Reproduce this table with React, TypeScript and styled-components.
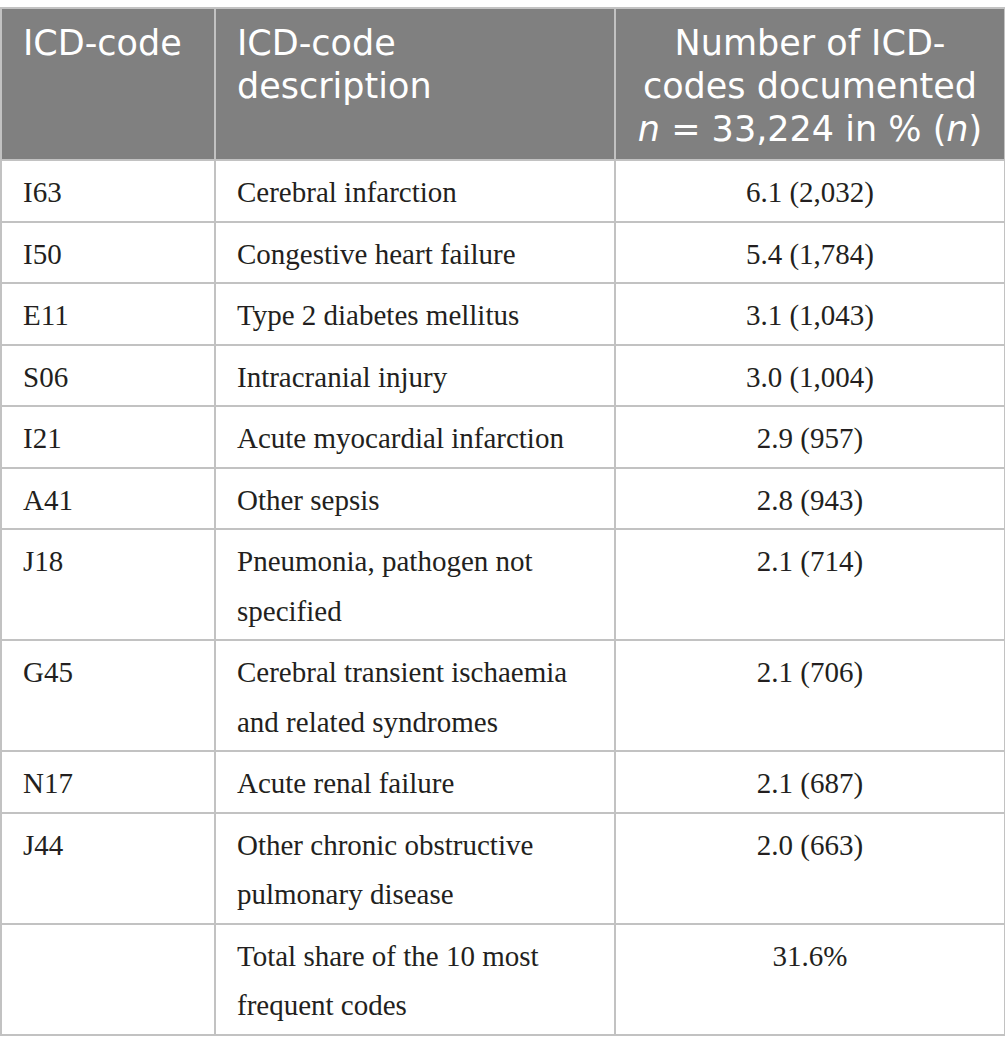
import styled, { createGlobalStyle } from 'styled-components';

const GlobalStyle = createGlobalStyle`
  body {
    margin: 0;
    background: #ffffff;
  }
`;

const Wrapper = styled.div`
  padding-top: 7px;
  width: 1005px;
`;

const Table = styled.table`
  width: 1004px;
  border-collapse: collapse;
  table-layout: fixed;
  border: 2px solid #c2c2c2;
`;

const HeadCell = styled.th<{ center?: boolean }>`
  background-color: #808080;
  color: #ffffff;
  font-family: 'DejaVu Sans', 'Liberation Sans', sans-serif;
  font-weight: 400;
  font-size: 35px;
  line-height: 43px;
  text-align: ${(props) => (props.center ? 'center' : 'left')};
  vertical-align: top;
  padding: 13px 21px 8px;
  border: 2px solid #c2c2c2;
  border-top: none;
  em {
    font-style: italic;
  }
`;

const Cell = styled.td<{ center?: boolean }>`
  font-family: 'Liberation Serif', 'Times New Roman', serif;
  font-size: 29px;
  line-height: 49.5px;
  color: #231f20;
  text-align: ${(props) => (props.center ? 'center' : 'left')};
  vertical-align: top;
  padding: 7px 21px 3px;
  border: 2px solid #c2c2c2;
`;

const rows = [
  { code: 'I63', desc: 'Cerebral infarction', value: '6.1 (2,032)' },
  { code: 'I50', desc: 'Congestive heart failure', value: '5.4 (1,784)' },
  { code: 'E11', desc: 'Type 2 diabetes mellitus', value: '3.1 (1,043)' },
  { code: 'S06', desc: 'Intracranial injury', value: '3.0 (1,004)' },
  { code: 'I21', desc: 'Acute myocardial infarction', value: '2.9 (957)' },
  { code: 'A41', desc: 'Other sepsis', value: '2.8 (943)' },
  { code: 'J18', desc: 'Pneumonia, pathogen not specified', value: '2.1 (714)' },
  {
    code: 'G45',
    desc: 'Cerebral transient ischaemia and related syndromes',
    value: '2.1 (706)',
  },
  { code: 'N17', desc: 'Acute renal failure', value: '2.1 (687)' },
  {
    code: 'J44',
    desc: 'Other chronic obstructive pulmonary disease',
    value: '2.0 (663)',
  },
  { code: '', desc: 'Total share of the 10 most frequent codes', value: '31.6%' },
];

function App() {
  return (
    <Wrapper>
      <GlobalStyle />
      <Table>
        <colgroup>
          <col style={{ width: 214 }} />
          <col style={{ width: 400 }} />
          <col style={{ width: 390 }} />
        </colgroup>
        <thead>
          <tr>
            <HeadCell>ICD-code</HeadCell>
            <HeadCell>ICD-code description</HeadCell>
            <HeadCell center>
              Number of ICD-codes documented <em>n</em> = 33,224 in % (
              <em>n</em>)
            </HeadCell>
          </tr>
        </thead>
        <tbody>
          {rows.map((row, idx) => (
            <tr key={idx}>
              <Cell>{row.code}</Cell>
              <Cell>{row.desc}</Cell>
              <Cell center>{row.value}</Cell>
            </tr>
          ))}
        </tbody>
      </Table>
    </Wrapper>
  );
}

export default App;
